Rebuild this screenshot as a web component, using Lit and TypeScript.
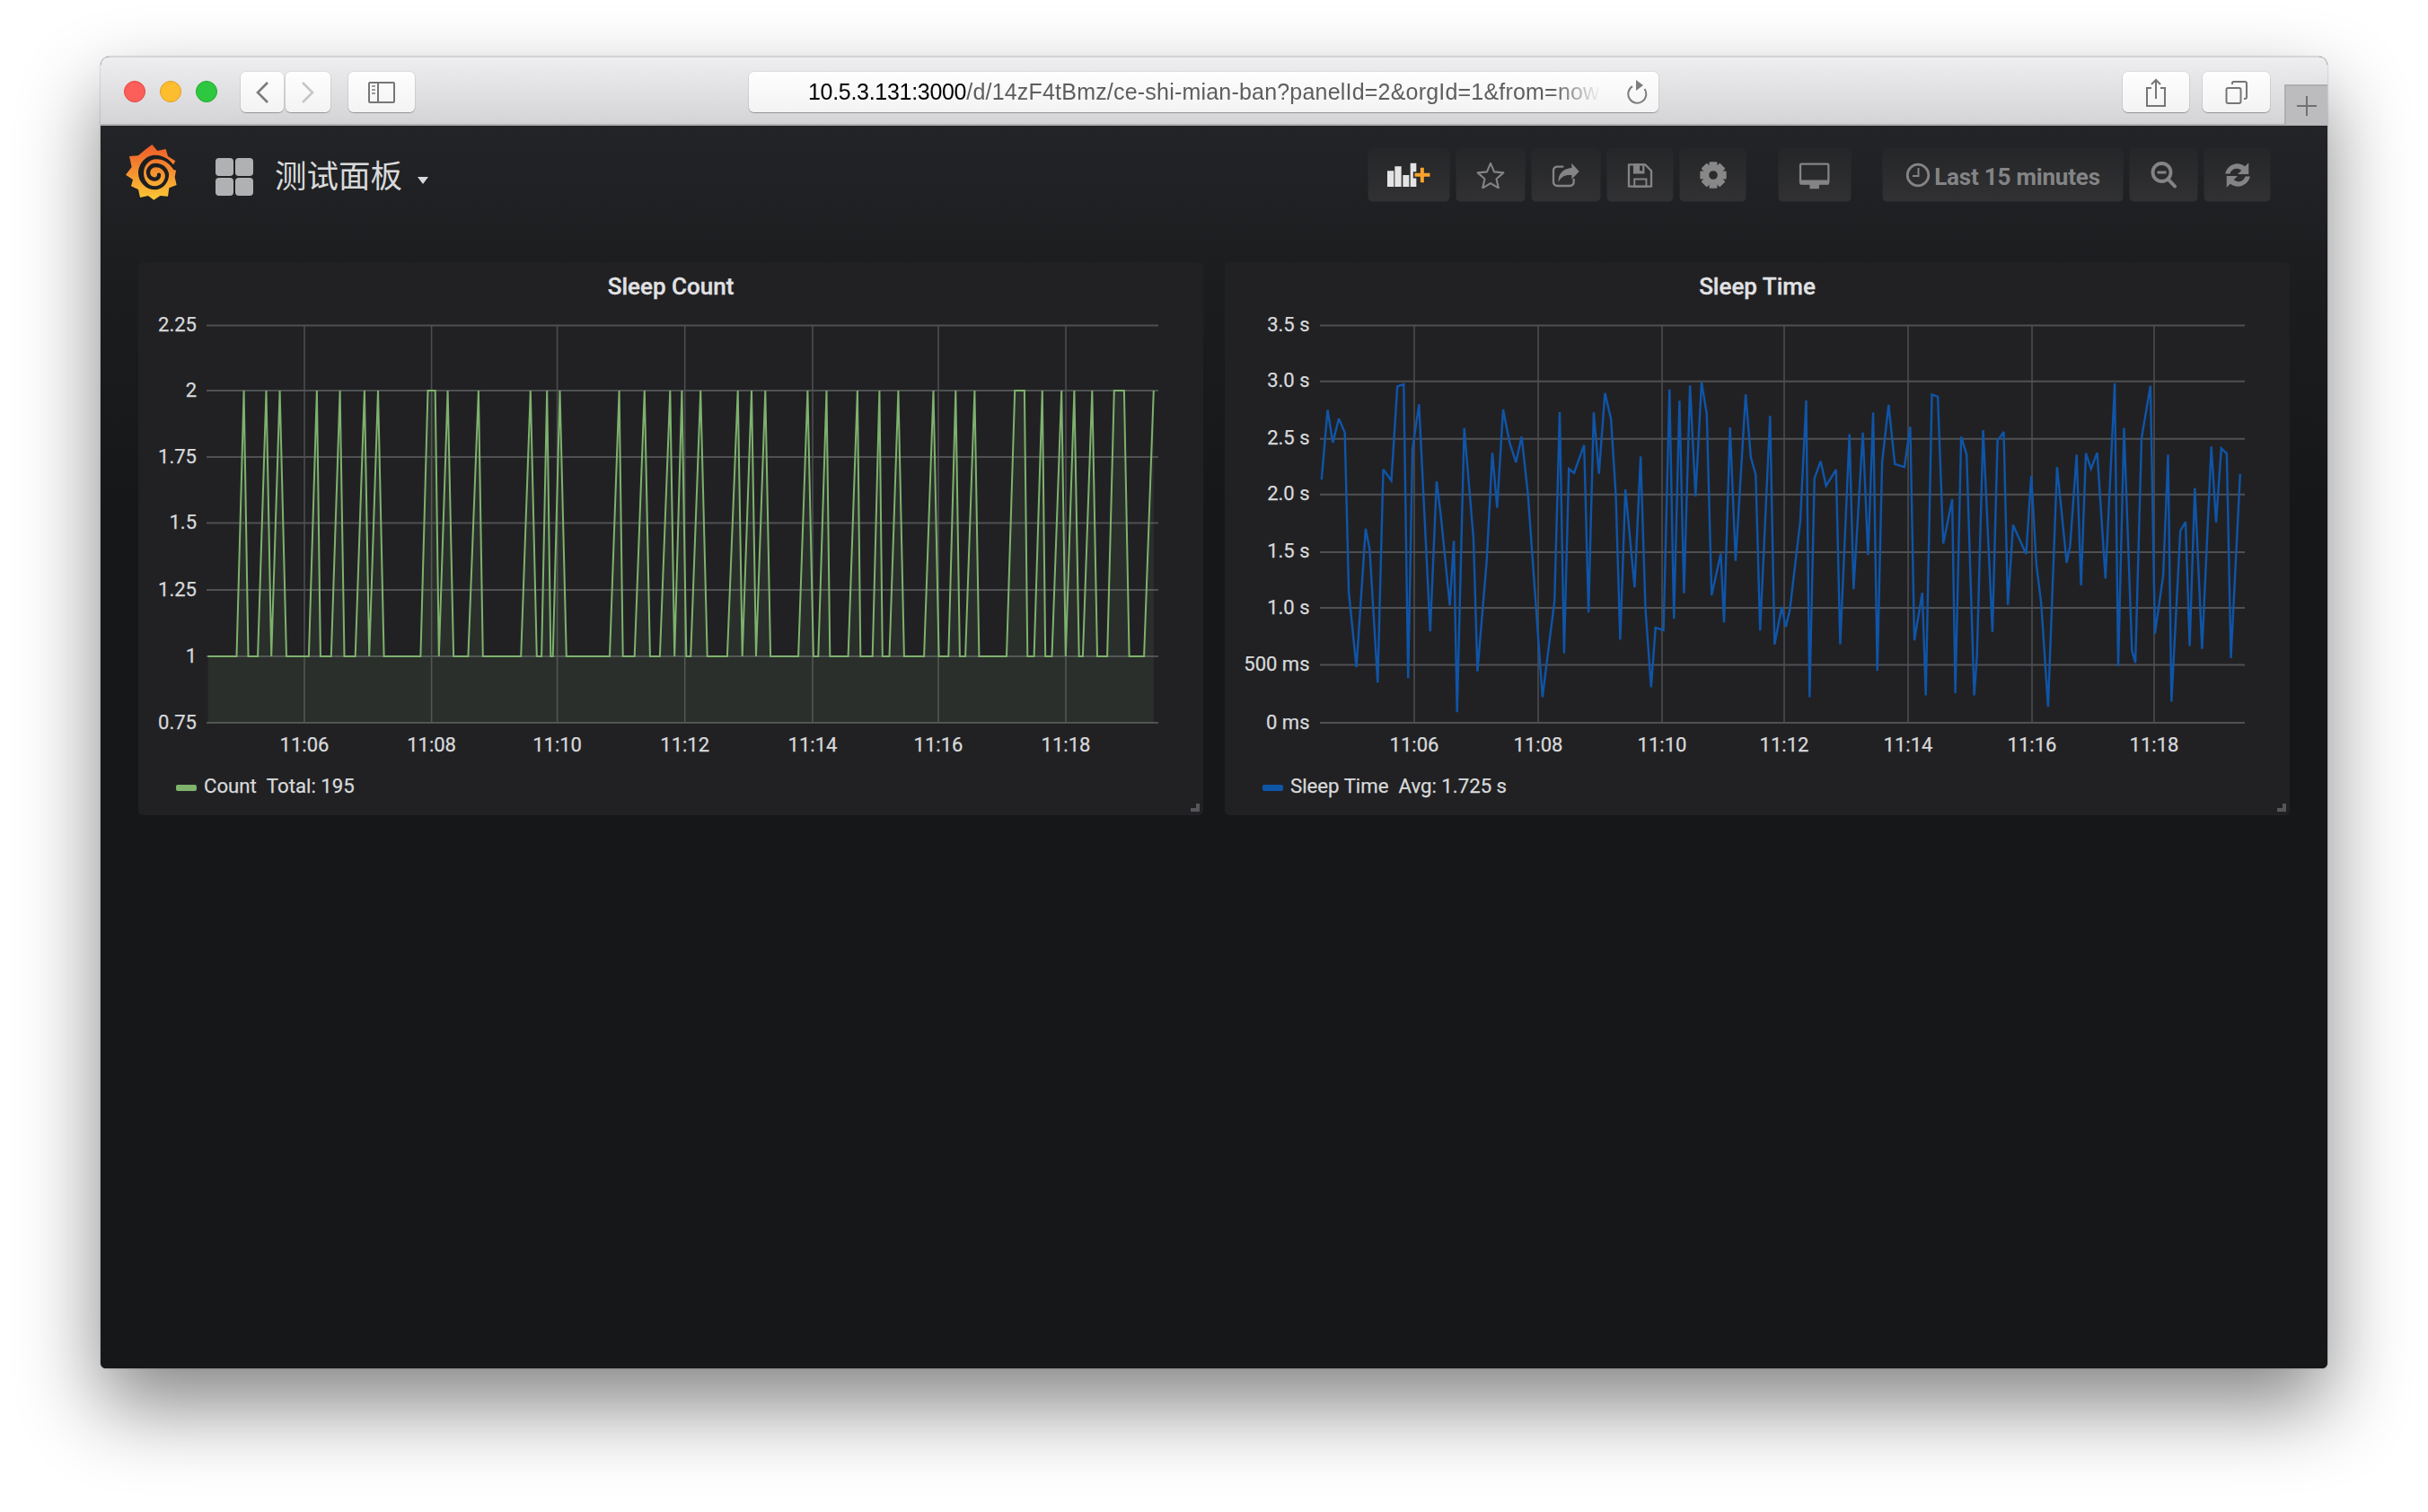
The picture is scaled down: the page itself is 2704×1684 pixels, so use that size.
import { LitElement, html, css, svg } from "lit";
import { customElement, property } from "lit/decorators.js";

type Pt = [number, number];
interface ChartSpec {
  title: string;
  left: number;
  plotL: number;
  plotR: number;
  labelX: number;
  hLines: { y: number; label: string }[];
  vLines: { x: number; label: string }[];
  line: Pt[];
  color: string;
  fill: boolean;
  legendName: string;
  legendValue: string;
  cls: string;
}

const Y_TOP = 435, Y_BASE = 731, Y_BOTTOM = 805;

const z4 = (v: number) => 150 + v / 2.45;
const z5 = (v: number) => 780 + v / 2.613;
const countA: [number, number][] = [[200,0],[278,0],[298,1],[310,0],[336,0],[359,1],[373,0],[396,1],[414,0],[475,0],[497,1],[507,0],[536,0],[560,1],[572,0],[602,0],[627,1],[640,0],[664,1],[680,0],[780,0],[800,1],[820,1],[830,0],[854,1],[870,0],[910,0],[938,1],[950,0],[1054,0],[1080,1],[1097,0],[1110,0],[1125,1],[1135,0],[1141,0],[1160,1],[1178,0],[1296,0],[1322,1],[1332,0],[1364,0],[1391,1],[1406,0],[1433,0],[1461,1],[1473,0],[1493,1],[1505,0],[1517,0],[1544,1]];
const countB: [number, number][] = [[20,0],[78,0],[109,1],[122,0],[149,1],[162,0],[189,1],[204,0],[285,0],[312,1],[329,0],[343,0],[367,1],[377,0],[430,0],[457,1],[466,0],[501,0],[521,1],[530,0],[550,0],[576,1],[593,0],[651,0],[678,1],[694,0],[722,0],[743,1],[755,0],[771,0],[798,1],[811,0],[891,0],[915,1],[943,1],[952,0],[971,0],[995,1],[1004,0],[1023,0],[1051,1],[1063,0],[1088,1],[1102,0],[1113,0],[1140,1],[1155,0],[1184,0],[1204,1],[1233,1],[1248,0],[1291,0],[1319,1]];
const countLine: Pt[] = [
  ...countA.map(([x, u]): Pt => [z4(x), u ? Y_TOP : Y_BASE]),
  ...countB.map(([x, u]): Pt => [z5(x), u ? Y_TOP : Y_BASE]),
];

const yz = (v: number) => 290 + v / 2.45;
const timeA: Pt[] = [[228,598],[243,408],[256,497],[271,432],[286,470],[296,905],[315,1110],[338,732],[348,790],[368,1152],[382,570],[402,601],[417,344],[433,338],[444,1140],[455,515],[471,393],[499,1012],[515,603],[526,700],[548,942],[558,765],[566,1233],[584,458],[607,760],[617,1121],[640,820],[654,525],[666,675],[681,407],[697,497],[713,551],[727,481],[743,640],[779,1192],[809,930],[822,414],[833,1072],[845,569],[858,580],[883,504],[894,961],[907,415],[920,582],[935,362],[950,433],[962,640],[973,1035],[986,625],[1009,892],[1024,535],[1036,950],[1050,1165],[1061,1002],[1081,1009],[1096,352],[1107,978],[1121,383],[1132,908],[1147,341],[1161,644],[1176,333],[1189,420],[1201,914],[1224,800],[1232,988],[1247,456],[1261,820],[1286,366],[1299,538],[1311,585],[1322,1010],[1347,424],[1358,1048],[1376,946],[1386,1000],[1396,955]];
const timeB: Pt[] = [[13,710],[30,382],[40,1192],[54,595],[72,548],[88,615],[117,571],[129,1048],[156,474],[168,897],[195,470],[210,804],[225,415],[237,1120],[251,550],[270,394],[288,556],[316,564],[333,454],[345,1037],[368,907],[378,1187],[396,366],[413,372],[429,773],[455,652],[464,1181],[481,481],[497,530],[519,1187],[527,1080],[545,463],[572,1014],[587,492],[605,468],[617,940],[632,722],[670,801],[685,588],[700,830],[714,935],[734,1218],[760,564],[788,825],[798,780],[817,530],[830,887],[844,526],[859,569],[877,525],[901,868],[928,336],[938,1107],[955,458],[978,1065],[988,1098],[1006,485],[1032,342],[1045,1018],[1069,860],[1083,530],[1093,1204],[1119,738],[1134,714],[1146,1052],[1161,621],[1182,1060],[1209,508],[1223,715],[1238,513],[1254,527],[1266,1085],[1293,583]];
const timeLine: Pt[] = [
  ...timeA.map(([x, y]): Pt => [1370 + x / 2.24, yz(y)]),
  ...timeB.map(([x, y]): Pt => [2000 + x / 2.613, yz(y)]),
];

const CHARTS: ChartSpec[] = [
  {
    title: "Sleep Count", left: 154, plotL: 230, plotR: 1290, labelX: 219,
    hLines: [[362.6,"2.25"],[435,"2"],[509,"1.75"],[582.6,"1.5"],[657,"1.25"],[731,"1"],[805,"0.75"]].map(([y,label]) => ({ y: y as number, label: label as string })),
    vLines: [[339,"11:06"],[480.6,"11:08"],[620.6,"11:10"],[762.7,"11:12"],[905,"11:14"],[1045,"11:16"],[1187,"11:18"]].map(([x,label]) => ({ x: x as number, label: label as string })),
    line: countLine, color: "#7eb26d", fill: true, legendName: "Count", legendValue: "Total: 195", cls: "green",
  },
  {
    title: "Sleep Time", left: 1364, plotL: 1470, plotR: 2500, labelX: 1458.5,
    hLines: [[362.6,"3.5 s"],[424.7,"3.0 s"],[488.8,"2.5 s"],[550.8,"2.0 s"],[614.9,"1.5 s"],[677,"1.0 s"],[740.6,"500 ms"],[805,"0 ms"]].map(([y,label]) => ({ y: y as number, label: label as string })),
    vLines: [[1575,"11:06"],[1713,"11:08"],[1851,"11:10"],[1987,"11:12"],[2125,"11:14"],[2263,"11:16"],[2399,"11:18"]].map(([x,label]) => ({ x: x as number, label: label as string })),
    line: timeLine, color: "#0f55a8", fill: false, legendName: "Sleep Time", legendValue: "Avg: 1.725 s", cls: "blue",
  },
];

@customElement("graph-panel")
class GraphPanel extends LitElement {
  @property({ attribute: false }) spec!: ChartSpec;

  static styles = css`
    :host { display: block; flex: 1 1 0; min-width: 0; }
    .panel {
      position: relative; height: 616px; box-sizing: border-box;
      background: #212124; border-radius: 5px;
      font-family: Roboto, "Liberation Sans", sans-serif; color: #d8d9da;
    }
    .title {
      height: 58px; display: flex; align-items: center; justify-content: center;
      font-size: 26px; font-weight: 500; padding-bottom: 4px; box-sizing: border-box;
      color: #e2e2e4; -webkit-text-stroke: 0.3px #e2e2e4;
    }
    svg.plot { display: block; width: 1186px; height: 500px; }
    .tick {
      font-family: Roboto, "Liberation Sans", sans-serif; font-size: 22px; fill: #d8d9da;
      stroke: #d8d9da; stroke-width: 0.25px;
    }
    .legend {
      display: flex; align-items: center; height: 58px; box-sizing: border-box;
      padding: 0 0 9px 42px; font-size: 22.2px; color: #d8d9da; -webkit-text-stroke: 0.25px #d8d9da;
    }
    .swatch { width: 23px; height: 7px; border-radius: 2px; margin: 6px 8px 0 0; }
    .green .swatch { background: #7eb26d; }
    .blue .swatch { background: #0f55a8; }
    .val { margin-left: 11px; }
    .grip {
      position: absolute; right: 4px; bottom: 4px; width: 10px; height: 9px;
      border-right: 4px solid #55565a; border-bottom: 4px solid #55565a; box-sizing: border-box;
    }
  `;

  render() {
    const s = this.spec;
    const pts = s.line.map((p) => `${p[0].toFixed(1)},${p[1].toFixed(1)}`).join(" ");
    const first = s.line[0], last = s.line[s.line.length - 1];
    const area = `${first[0].toFixed(1)},${Y_BOTTOM} ${pts} ${last[0].toFixed(1)},${Y_BOTTOM}`;
    return html`
      <div class="panel ${s.cls}">
        <div class="title">${s.title}</div>
        <svg class="plot" viewBox="${s.left} 350 1186 500">
          ${s.vLines.map((v) => svg`<line x1=${v.x} x2=${v.x} y1="362" y2="805" stroke="#4c4d4f" stroke-width="1.6"></line>`)}
          ${s.hLines.map((h) => svg`<line x1=${s.plotL} x2=${s.plotR} y1=${h.y} y2=${h.y} stroke="#4f5052" stroke-width="2"></line>`)}
          ${s.fill ? svg`<polygon points=${area} fill=${s.color} fill-opacity="0.1"></polygon>` : ""}
          <polyline points=${pts} fill="none" stroke=${s.color} stroke-width=${s.fill ? 2 : 2.4} stroke-linejoin="miter" stroke-miterlimit="3"></polyline>
          ${s.hLines.map((h) => svg`<text class="tick" x=${s.labelX} y=${h.y + 6.5} text-anchor="end">${h.label}</text>`)}
          ${s.vLines.map((v) => svg`<text class="tick" x=${v.x} y="837" text-anchor="middle">${v.label}</text>`)}
        </svg>
        <div class="legend">
          <span class="swatch"></span><span>${s.legendName}</span><span class="val">${s.legendValue}</span>
        </div>
        <div class="grip"></div>
      </div>`;
  }
}

@customElement("app-root")
class AppRoot extends LitElement {
  static styles = css`
    :host { display: block; width: 2704px; height: 1684px; background: #fff; overflow: hidden; }
    .page { box-sizing: border-box; width: 2704px; height: 1684px; padding: 63px 112px 160px; }
    .window {
      height: 1461px; display: flex; flex-direction: column; border-radius: 10px 10px 6px 6px;
      box-shadow: 0 42px 90px rgba(0,0,0,.48), 0 0 2px rgba(0,0,0,.35);
      overflow: hidden; background: #161719;
    }
    .toolbar {
      height: 77px; box-sizing: border-box; flex: none; display: flex; align-items: flex-start;
      padding: 16px 0 0 26px; border-top: 1px solid #d2d1d3;
      border-bottom: 2px solid #b1afb2;
      background: linear-gradient(#eeedef, #d4d3d6);
    }
    .lights { display: flex; gap: 16px; margin: 10px 26px 0 0; }
    .light { width: 24px; height: 24px; border-radius: 50%; box-sizing: border-box; }
    .red { background: #fc5f5a; border: 1px solid #e2463f; }
    .yellow { background: #fdbd2e; border: 1px solid #dfa023; }
    .green { background: #2ec840; border: 1px solid #1eaa2c; }
    .sbtn {
      height: 45px; box-sizing: border-box; display: flex; align-items: center; justify-content: center;
      background: linear-gradient(#fefefe, #f3f3f4); border-radius: 6px;
      box-shadow: 0 1px 1px rgba(0,0,0,.28), 0 0 0 1px rgba(0,0,0,.05);
    }
    .back { width: 48px; margin-right: 2px; }
    .fwd { width: 50px; margin-right: 20px; }
    .side { width: 74px; }
    .url {
      width: 1013px; margin-left: 372px; justify-content: flex-start; box-sizing: border-box;
      padding-left: 66px; position: relative;
    }
    .urltext {
      width: 892px; overflow: hidden; white-space: nowrap; color: #5e5e5e;
      font-family: "Liberation Sans", Arial, sans-serif; font-size: 25px; letter-spacing: 0.2px;
      -webkit-mask-image: linear-gradient(90deg, #000 93%, transparent 99%);
      mask-image: linear-gradient(90deg, #000 93%, transparent 99%);
    }
    .urltext b { font-weight: 400; color: #000; letter-spacing: -0.3px; }
    .reload { position: absolute; right: 12px; top: 9px; }
    .share { width: 74px; margin-left: auto; margin-right: 15px; }
    .tabs { width: 75px; margin-right: 16px; }
    .newtab {
      width: 48px; height: 45px; margin-top: 14px; box-sizing: border-box; background: #bcbbbd;
      border-left: 2px solid #aeadaf; border-top: 2px solid #aeadaf; display: flex;
      align-items: center; justify-content: center;
    }
    .dash {
      flex: 1; min-height: 0; display: flex; flex-direction: column;
      background: linear-gradient(#232427 0, #1c1d1f 160px, #161719 420px);
    }
    .nav { display: flex; align-items: center; height: 60px; margin: 25px 0 67px; padding-right: 63px; }
    .logo { width: 80px; height: 80px; margin: -10px 0 0 18px; flex: none; }
    .grid {
      margin-left: 30px; width: 42px; height: 42px; display: grid; gap: 2px;
      grid-template-columns: 1fr 1fr; grid-template-rows: 1fr 1fr; margin-top: 3px;
    }
    .grid i { background: #b0b1b2; border-radius: 4px; }
    .dname {
      margin-left: 24px; font-family: "Noto Sans CJK SC", sans-serif; font-size: 35.5px; color: #d8d9da;
      line-height: 42px; margin-top: -3px;
    }
    .caret {
      width: 0; height: 0; border: 6.5px solid transparent; border-top: 8px solid #d8d9da; border-bottom: 0;
      margin: 12px 0 0 17px;
    }
    .btns { margin-left: auto; display: flex; align-items: center; }
    .gb {
      height: 60px; box-sizing: border-box; display: flex; align-items: center; justify-content: center;
      background: linear-gradient(#252628, #313133); border-radius: 5px; border: 1px solid #26272a;
      margin-right: 6px; flex: none;
    }
    .gb:last-child { margin-right: 0; }
    .w92 { width: 92px; } .w78 { width: 78px; } .w75 { width: 75px; }
    .w82 { width: 82px; } .w77 { width: 77px; } .w269 { width: 269px; }
    .gap1 { margin-right: 35px; } .gap2 { margin-right: 34px; }
    .range {
      gap: 4px; font-family: Roboto, "Liberation Sans", sans-serif; font-weight: 700; font-size: 26px; color: #848486;
      letter-spacing: -0.2px;
    }
    .range span { padding-top: 4px; }
    .panels { display: flex; gap: 24px; padding: 0 42px; }
    svg { display: block; }
  `;

  private gear() {
    const teeth = [0, 45, 90, 135, 180, 225, 270, 315];
    return teeth.map((a) => svg`<rect x="-6.500" y="-21.500" width="13" height="10" rx="1.500" fill="#888" transform="rotate(${a})"></rect>`);
  }

  render() {
    return html`
      <div class="page">
        <div class="window">
          <div class="toolbar">
            <div class="lights"><span class="light red"></span><span class="light yellow"></span><span class="light green"></span></div>
            <div class="sbtn back"><svg width="16" height="26" viewBox="0 0 16 26"><path d="M14 2 3 13l11 11" fill="none" stroke="#7b7b7c" stroke-width="2.6"/></svg></div>
            <div class="sbtn fwd"><svg width="16" height="26" viewBox="0 0 16 26"><path d="M2 2l11 11L2 24" fill="none" stroke="#c6c6c7" stroke-width="2.6"/></svg></div>
            <div class="sbtn side"><svg width="30" height="24" viewBox="0 0 30 24"><rect x="1" y="1" width="28" height="22" rx="1" fill="none" stroke="#767677" stroke-width="2"/><path d="M11 1v22" stroke="#767677" stroke-width="2"/><path d="M4 5h4M4 9h4M4 13h4" stroke="#9a9a9b" stroke-width="2"/></svg></div>
            <div class="sbtn url">
              <div class="urltext"><b>10.5.3.131:3000</b>/d/14zF4tBmz/ce-shi-mian-ban?panelId=2&amp;orgId=1&amp;from=now</div>
              <svg class="reload" width="24" height="27" viewBox="0 0 24 27"><path d="M7 7.2A10 10 0 1 0 20.5 10" fill="none" stroke="#7d7d7e" stroke-width="2"/><path d="M11 0l8 6-8 6z" fill="#7d7d7e"/></svg>
            </div>
            <div class="sbtn share"><svg width="24" height="32" viewBox="0 0 24 32"><path d="M7 11H2v20h20V11h-5" fill="none" stroke="#767677" stroke-width="2"/><path d="M12 23V2M7 7l5-5 5 5" fill="none" stroke="#767677" stroke-width="2"/></svg></div>
            <div class="sbtn tabs"><svg width="26" height="26" viewBox="0 0 26 26"><rect x="1.5" y="8" width="16" height="17" rx="2" fill="none" stroke="#767677" stroke-width="2"/><path d="M8 4V2.5Q8 1 9.500 1H22q2 0 2 2v15q0 2-2 2h-1" fill="none" stroke="#767677" stroke-width="2"/></svg></div>
            <div class="newtab"><svg width="24" height="24" viewBox="0 0 24 24"><path d="M12 1v22M1 12h22" stroke="#707071" stroke-width="2"/></svg></div>
          </div>
          <div class="dash">
            <div class="nav">
              <svg class="logo" viewBox="0 0 240 240">
                <defs><linearGradient id="gl" x1="0" y1="0" x2="0" y2="1"><stop offset="0" stop-color="#ee5a2b"/><stop offset="1" stop-color="#fbc935"/></linearGradient></defs>
                <path fill="url(#gl)" d="M118 33 136 54 164 48 171 72 196 88 186 106 198 120 194 142 200 168 175 178 171 206 145 204 124 218 105 204 78 210 72 183 48 172 54 150 30 134 50 108 42 72 72 70 95 50Z"/>
                <path fill="none" stroke="#1d1e20" stroke-width="13" stroke-linecap="round" d="M168 135C166 115 150 102 130 102 115 102 104 115 105 128 106 142 118 150 128 149 136 148 142 142 141 134"/>
                <path fill="#1d1e20" d="M199 118C186 88 160 68 128 68 96 68 72 98 72 128c0 30 26 56 56 56 24 0 46-22 46-49l-12 0c0 20-16 37-34 37-22 0-38-20-38-44 0-24 18-46 42-46 26 0 44 14 59 36Z"/>
              </svg>
              <div class="grid"><i></i><i></i><i></i><i></i></div>
              <div class="dname">测试面板</div>
              <div class="caret"></div>
              <div class="btns">
                <div class="gb w92"><svg width="50" height="30" viewBox="72 62 150 90">
                  <path fill="#e4e4e4" d="M75 93h22v53H75zM100 78h22v68h-22zM127 107h21v39h-21zM152 67h20v79h-20z"/>
                  <path fill="#f9a32c" stroke="#2a2a2c" stroke-width="5" d="M183 80h17v18h20v17h-20v19h-17v-19h-19V98h19z"/>
                </svg></div>
                <div class="gb w78"><svg width="32" height="30" viewBox="-24 -24 48 46"><path d="M0-21 6.200-6.500 22-5 10 5.500 13.500 21 0 13-13.500 21-10 5.500-22-5-6.200-6.500Z" fill="none" stroke="#848486" stroke-width="3.200" stroke-linejoin="round"/></svg></div>
                <div class="gb w78"><svg width="32" height="29" viewBox="625 58 96 87">
                  <path d="M665 72H645Q631 72 631 86V122Q631 136 645 136H685Q699 136 699 122V112" fill="none" stroke="#848486" stroke-width="7"/>
                  <path fill="#848486" d="M692 60 717 88 692 114V100C670 98 655 105 648 125 645 95 665 78 692 76Z"/>
                </svg></div>
                <div class="gb w75"><svg width="29" height="29" viewBox="875 64 88 88">
                  <path d="M881 71H936L957 92V145H881Z" fill="none" stroke="#848486" stroke-width="7" stroke-linejoin="round"/>
                  <path fill="#848486" fill-rule="evenodd" d="M896 68h38v34h-38zM918 74h9v18h-9z"/>
                  <path d="M900 120h40v25h-40z" fill="none" stroke="#848486" stroke-width="6"/>
                </svg></div>
                <div class="gb w75 gap1"><svg width="30" height="30" viewBox="-22 -22 44 44">
                  <g>${this.gear()}</g>
                  <path fill="#888" fill-rule="evenodd" d="M0-16a16 16 0 1 0 .01 0ZM0-7a7 7 0 1 1-.01 0Z"/>
                </svg></div>
                <div class="gb w82 gap2"><svg width="36" height="31" viewBox="398 55 110 95">
                  <rect x="404" y="63" width="96" height="66" rx="4" fill="none" stroke="#848486" stroke-width="7"/>
                  <path fill="#848486" d="M402 118h100v12q0 4-4 4H406q-4 0-4-4zM436 134h32v14h-32z"/>
                </svg></div>
                <div class="gb w269 range">
                  <svg width="28" height="28" viewBox="0 0 28 28"><circle cx="14" cy="14" r="11.800" fill="none" stroke="#848486" stroke-width="2.800"/><path d="M14.500 6v9H8" fill="none" stroke="#848486" stroke-width="2"/></svg>
                  <span>Last 15 minutes</span>
                </div>
                <div class="gb w77"><svg width="30" height="30" viewBox="0 0 30 30"><circle cx="12.500" cy="12" r="10" fill="none" stroke="#848486" stroke-width="3.800"/><path d="M7.500 12h10" stroke="#848486" stroke-width="3"/><path d="M19.500 19.500 27 27.500" stroke="#848486" stroke-width="4" stroke-linecap="round"/></svg></div>
                <div class="gb w75"><svg width="32" height="32" viewBox="0 0 30 30" fill="#848486"><path d="M26.500 2v12H15l4-4A7.500 7.500 0 0 0 7 13.500H2A13 13 0 0 1 22.700 5.800Z"/><path d="M3.500 28V16H15l-4 4A7.500 7.500 0 0 0 23 16.500h5A13 13 0 0 1 7.300 24.200Z"/></svg></div>
              </div>
            </div>
            <div class="panels">
              ${CHARTS.map((c) => html`<graph-panel .spec=${c}></graph-panel>`)}
            </div>
          </div>
        </div>
      </div>`;
  }
}
